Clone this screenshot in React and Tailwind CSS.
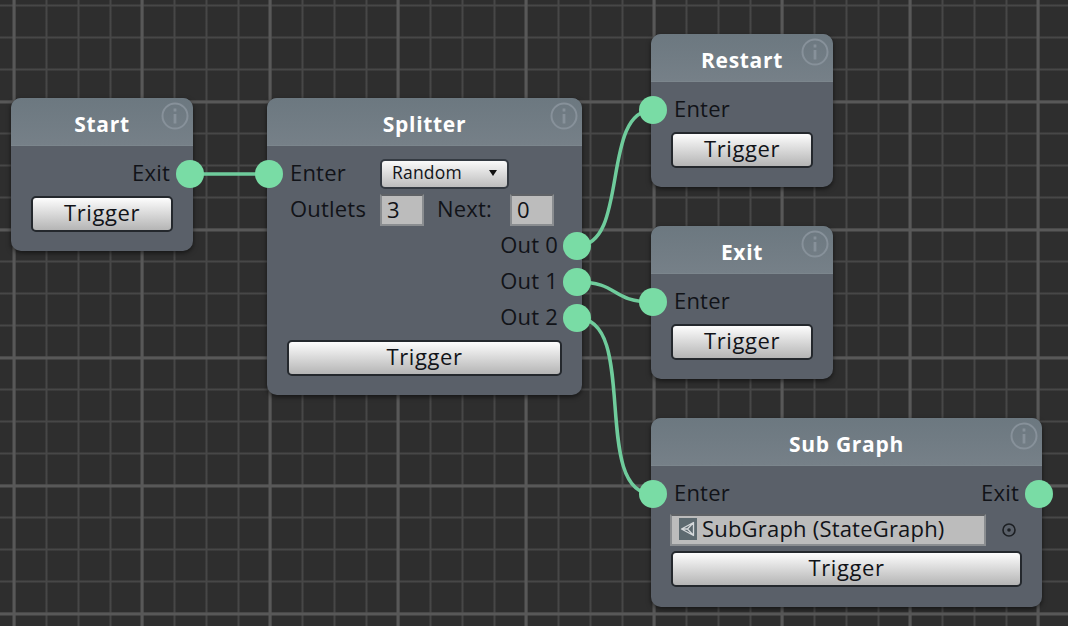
const FONT = "font-['Open_Sans',sans-serif]"

function Info() {
  return (
    <svg className="absolute right-[4px] top-[4px]" width="28" height="28" viewBox="0 0 28 28" fill="none">
      <circle cx="14" cy="14" r="12.5" stroke="#87919a" strokeWidth="2" />
      <rect x="12.6" y="12" width="2.8" height="9.5" fill="#87919a" />
      <rect x="12.6" y="6.5" width="2.8" height="3" fill="#87919a" />
    </svg>
  )
}

// connection dot, hangs over the node edge
function Port({ side, offset }) {
  return (
    <span
      className={`absolute top-1/2 w-[28px] h-[28px] -mt-[14px] rounded-full bg-[#79dca5] ${side === 'left' ? '-left-[12px]' : '-right-[11px]'}`}
      style={offset ? { marginRight: offset } : undefined}
    />
  )
}

function Row({ children, className = '' }) {
  return <div className={`relative h-[36px] flex items-center text-[22px] tracking-[0.2px] text-[#111318] ${className}`}>{children}</div>
}

function Label({ children, className = '' }) {
  return <span className={`-mt-[4px] ${className}`}>{children}</span>
}

function Button({ className = '' }) {
  return (
    <button className={`flex items-center justify-center h-[36px] pb-[3px] mx-[20px] rounded-[5px] border-2 border-[#24282d] bg-gradient-to-b from-[#fdfdfd] to-[#b5b5b5] text-[22px] tracking-[0.6px] text-[#111318] ${className}`}>
      Trigger
    </button>
  )
}

function Node({ title, left, top, width, height, children }) {
  return (
    <div
      className="absolute flex flex-col rounded-[10px] bg-[#5a6069] shadow-[0_2px_5px_rgba(0,0,0,0.55)]"
      style={{ left, top, width, height }}
    >
      <div className="relative flex items-center justify-center h-[48px] pt-[6px] rounded-t-[10px] bg-gradient-to-b from-[#6c7880] to-[#768088] border-b border-[#7c868d] text-[21px] font-bold tracking-[0.7px] text-white">
        {title}
        <Info />
      </div>
      <div className="pt-[10px] flex flex-col">{children}</div>
    </div>
  )
}

function NumberField({ value, className = '' }) {
  return (
    <div className={`w-[44px] h-[32px] pl-[5px] pb-[2px] flex items-center border-2 border-[#8a8d90] border-t-[#5f6266] bg-[#bcbcbc] text-[22px] ${className}`}>
      {value}
    </div>
  )
}

function Wires() {
  return (
    <svg className="absolute left-0 top-0" width="1068" height="626" fill="none" stroke="#6fcc9c" strokeWidth="3.5">
      <path d="M190 174 L269 174" />
      <path d="M577 246 C 630 246, 600 110, 653 110" />
      <path d="M577 282 C 620 282, 610 302, 653 302" />
      <path d="M577 318 C 640 318, 590 494, 653 494" />
    </svg>
  )
}

function UnityIcon() {
  return (
    <svg width="18" height="22" viewBox="0 0 18 22" className="shrink-0" fill="none">
      <rect width="18" height="22" fill="#5d6a70" />
      <path d="M2.5 11 L14.5 4.5 V17.5 Z M2.5 11 H8.5 M14.5 4.5 L8.5 11 L14.5 17.5" stroke="#d5d9db" strokeWidth="1.3" strokeLinejoin="round" />
    </svg>
  )
}

export default function App() {
  return (
    <div
      className={`${FONT} relative w-[1068px] h-[626px] overflow-hidden bg-[#2e2e2e] bg-[linear-gradient(to_right,transparent_0,#585858_1px,#585858_3px,transparent_4px),linear-gradient(to_bottom,transparent_0,#585858_1px,#585858_3px,transparent_4px),linear-gradient(to_right,transparent_0,#474747_1px,#474747_2px,transparent_3px),linear-gradient(to_bottom,transparent_0,#474747_1px,#474747_2px,transparent_3px)] [background-size:128px_128px,128px_128px,32px_32px,32px_32px] [background-position:12px_0,0_100px,13px_0,0_4px]`}
    >
      <Wires />

      <Node title="Start" left={11} top={98} width={182} height={153}>
        <Row className="justify-end pr-[23px]">
          <Label>Exit</Label>
          <Port side="right" />
        </Row>
        <Button className="mt-[4px]" />
      </Node>

      <Node title="Splitter" left={267} top={98} width={315} height={297}>
        <Row className="pl-[23px]">
          <Port side="left" />
          <Label className="w-[90px]">Enter</Label>
          <div className="w-[129px] h-[30px] -mt-[1px] pl-[10px] pr-[10px] pb-[2px] flex items-center justify-between rounded-[5px] border-2 border-[#343a42] bg-gradient-to-b from-[#fafafa] to-[#bdbdbd] text-[17.5px]">
            Random
            <span className="w-0 h-0 border-x-[4px] border-x-transparent border-t-[6px] border-t-[#111]" />
          </div>
        </Row>
        <Row className="pl-[23px]">
          <Label className="w-[90px]">Outlets</Label>
          <NumberField value="3" />
          <Label className="w-[86px] pl-[13px]">Next:</Label>
          <NumberField value="0" />
        </Row>
        <Row className="justify-end pr-[24px]"><Label>Out 0</Label><Port side="right" offset={2} /></Row>
        <Row className="justify-end pr-[24px]"><Label>Out 1</Label><Port side="right" offset={2} /></Row>
        <Row className="justify-end pr-[24px]"><Label>Out 2</Label><Port side="right" offset={2} /></Row>
        <Button className="mt-[4px]" />
      </Node>

      <Node title="Restart" left={651} top={34} width={182} height={153}>
        <Row className="pl-[23px]">
          <Port side="left" />
          <Label>Enter</Label>
        </Row>
        <Button className="mt-[4px]" />
      </Node>

      <Node title="Exit" left={651} top={226} width={182} height={153}>
        <Row className="pl-[23px]">
          <Port side="left" />
          <Label>Enter</Label>
        </Row>
        <Button className="mt-[4px]" />
      </Node>

      <Node title="Sub Graph" left={651} top={418} width={391} height={189}>
        <Row className="justify-between px-[23px]">
          <Port side="left" />
          <Label>Enter</Label>
          <Label>Exit</Label>
          <Port side="right" />
        </Row>
        <Row className="pl-[19px]">
          <div className="w-[316px] h-[32px] pl-[7px] pb-[3px] flex items-center gap-[5px] border-2 border-[#8a8d90] border-t-[#5f6266] bg-[#bcbcbc] whitespace-nowrap">
            <UnityIcon />
            SubGraph (StateGraph)
          </div>
          <svg className="ml-[15px]" width="16" height="16" viewBox="0 0 16 16" fill="none">
            <circle cx="8" cy="8" r="6" stroke="#1c1f23" strokeWidth="1.6" />
            <circle cx="8" cy="8" r="1.8" fill="#1c1f23" />
          </svg>
        </Row>
        <Button className="mt-[3px]" />
      </Node>
    </div>
  )
}
